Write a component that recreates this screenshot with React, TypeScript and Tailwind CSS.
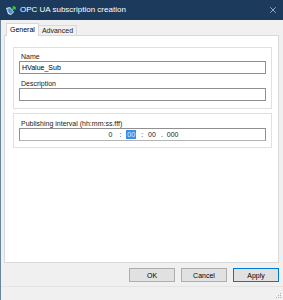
import { X } from 'lucide-react'

const font = { fontFamily: '"Liberation Sans", Arial, sans-serif' }

function TitleIcon() {
  return (
    <svg width="12" height="11" viewBox="0 0 12 11" className="shrink-0">
      <path d="M1 3 L5 2 L9 7 L6 10 L3 9 Z" fill="#cfe3f5" />
      <path d="M2 4 L5 3 L8 7 L6 9 L4 8 Z" fill="#4d8fcf" />
      <path d="M7 5 L10 2 M10 2 L10 4.5 M10 2 L7.5 2" stroke="#3fbf3f" strokeWidth="1.6" fill="none" />
    </svg>
  )
}

function Field({ label, value }: { label: string; value?: string }) {
  return (
    <div className="flex flex-col">
      <div className="pl-[2px] text-[7px] leading-[9px] text-[#1a1a1a]">{label}</div>
      <div className="h-[13px] border border-[#8f8f8f] bg-white flex items-center pl-[2px] text-[7px] leading-none text-black">
        {value}
      </div>
    </div>
  )
}

export default function App() {
  return (
    <div className="w-[283px] h-[300px] flex flex-col bg-[#f0f0f0] overflow-hidden" style={font}>
      {/* Title bar */}
      <div className="h-[20px] bg-[#1c3b5c] flex items-center pl-[5px] pr-[5px] shrink-0">
        <TitleIcon />
        <span className="ml-[3px] text-[8px] text-white leading-none">OPC UA subscription creation</span>
        <X className="ml-auto w-[10px] h-[10px] text-[#d8dde3]" strokeWidth={1.6} />
      </div>

      {/* Body */}
      <div className="flex-1 flex flex-col border-l border-[#6a84a4]">
        {/* Tabs */}
        <div className="flex items-end h-[15px] pl-[5px]">
          <div className="relative z-10 h-[13px] -mb-px px-[3px] bg-white border border-b-0 border-[#d9d9d9] text-[7px] leading-[12px] text-black">General</div>
          <div className="h-[10px] px-[3px] bg-[#f0f0f0] border border-b-0 border-l-0 border-[#d9d9d9] text-[7px] leading-[10px] text-[#1a1a1a]">Advanced</div>
        </div>

        {/* Tab page */}
        <div className="ml-[3px] mr-[4px] h-[228px] bg-white border border-[#d9d9d9] pt-[11px] pl-[8px] pr-[6px]">
          <div className="border border-[#e0e0e0] px-[5px] pt-[4px] pb-[7px] flex flex-col gap-[5px]">
            <Field label="Name" value="HValue_Sub" />
            <Field label="Description" />
          </div>

          <div className="mt-[4px] border border-[#e0e0e0] px-[5px] pt-[5px] pb-[6px]">
            <div className="pl-[2px] text-[7px] leading-[9px] text-[#1a1a1a]">Publishing interval (hh:mm:ss.fff)</div>
            <div className="h-[13px] border border-[#8f8f8f] border-b-[#b4b4b4] bg-white flex items-center justify-center text-[7px] leading-none text-[#1a1a1a] pl-[2px]">
              <span>0</span>
              <span className="ml-[7px]">:</span>
              <span className="ml-[5px] px-[1px] h-[9px] flex items-center bg-[#3d8fe6] text-[#dcecff]">00</span>
              <span className="ml-[5px]">:</span>
              <span className="ml-[5px]">00</span>
              <span className="ml-[5px]">.</span>
              <span className="ml-[4px]">000</span>
            </div>
          </div>
        </div>

        {/* Buttons */}
        <div className="flex justify-end gap-[6px] pr-[4px] mt-[5px]">
          <button className="w-[46px] h-[14px] bg-[#e1e1e1] border border-[#adadad] text-[7px] leading-none text-black">OK</button>
          <button className="w-[46px] h-[14px] bg-[#e1e1e1] border border-[#adadad] text-[7px] leading-none text-black">Cancel</button>
          <button className="w-[46px] h-[14px] bg-[#e1e1e1] border border-[#0078d7] text-[7px] leading-none text-black">Apply</button>
        </div>

        {/* Status strip */}
        <div className="mt-auto h-[14px] border-t border-[#e4e4e4] flex items-end justify-end pr-[1px] pb-[1px]">
          <svg width="7" height="7" viewBox="0 0 7 7">
            <rect x="5" y="1" width="1" height="1" fill="#b0b0b0" />
            <rect x="3" y="3" width="1" height="1" fill="#b0b0b0" />
            <rect x="5" y="3" width="1" height="1" fill="#b0b0b0" />
            <rect x="1" y="5" width="1" height="1" fill="#b0b0b0" />
            <rect x="3" y="5" width="1" height="1" fill="#b0b0b0" />
            <rect x="5" y="5" width="1" height="1" fill="#b0b0b0" />
          </svg>
        </div>
      </div>
    </div>
  )
}
